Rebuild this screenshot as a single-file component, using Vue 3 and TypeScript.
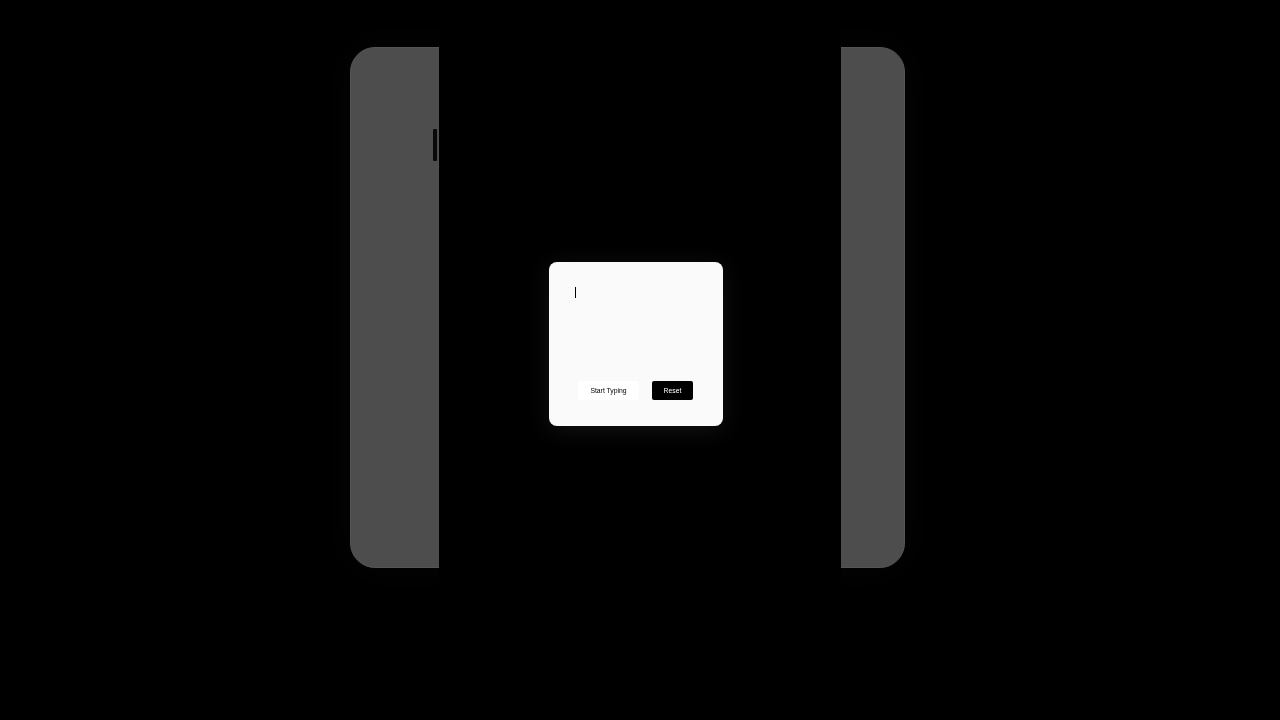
<script setup lang="ts">
const actions: { label: string; kind: string }[] = [
  { label: 'Start Typing', kind: 'light' },
  { label: 'Reset', kind: 'dark' },
]
</script>

<template>
  <main class="stage">
    <section class="phone">
      <span class="side-mark"></span>
    </section>
    <div class="column">
      <div class="dialog">
        <div class="editor"><span class="caret"></span></div>
        <div class="actions">
          <button
            v-for="action in actions"
            :key="action.label"
            type="button"
            :class="['btn', action.kind]"
          ><span class="btn-label">{{ action.label }}</span></button>
        </div>
      </div>
    </div>
  </main>
</template>

<style scoped>
.stage {
  position: relative;
  width: 1280px;
  height: 720px;
  overflow: hidden;
  background: #000;
  padding: 47px 0 0 350px;
  box-sizing: border-box;
}
.phone {
  position: relative;
  width: 555px;
  height: 521px;
  box-sizing: border-box;
  background: #4d4d4d;
  border: 1px solid #555;
  border-radius: 25px;
  box-shadow: 0 0 40px rgba(255, 255, 255, 0.025);
}
.side-mark {
  position: absolute;
  left: 82px;
  top: 81px;
  width: 4px;
  height: 32px;
  background: #0a0a0a;
  border-radius: 1px;
}
.column {
  position: absolute;
  left: 439px;
  top: 0;
  width: 402px;
  height: 720px;
  box-sizing: border-box;
  padding: 262px 0 0 110px;
  background: #000;
}
.dialog {
  width: 174px;
  height: 164px;
  box-sizing: border-box;
  padding: 25px 30px 26px 26px;
  display: flex;
  flex-direction: column;
  justify-content: space-between;
  background: #fafafa;
  border-radius: 8px;
  box-shadow: 0 4px 24px rgba(255, 255, 255, 0.08);
}
.editor {
  height: 11px;
}
.caret {
  display: block;
  width: 1px;
  height: 11px;
  background: #000;
}
.actions {
  display: flex;
  gap: 13px;
  padding-left: 3px;
}
.btn {
  height: 19px;
  padding: 0;
  border: 0;
  border-radius: 2px;
  font-family: "Liberation Sans", Arial, sans-serif;
  font-size: 6.8px;
}
.btn-label {
  display: inline-block;
  will-change: opacity;
}
.light {
  width: 61px;
  background: #fff;
  color: #000;
}
.dark {
  width: 41px;
  background: #000;
  color: #fff;
}
</style>
